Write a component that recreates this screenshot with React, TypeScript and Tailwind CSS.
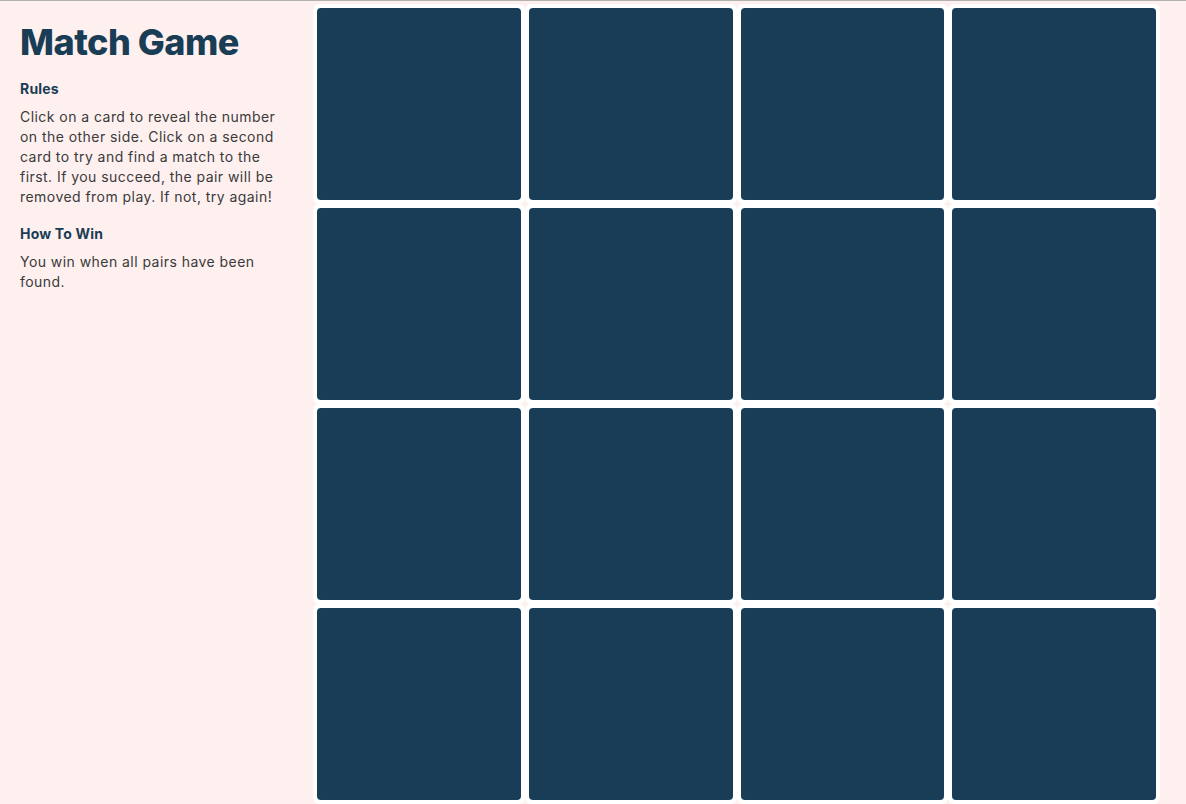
export default function App() {
  const cards = Array.from({ length: 16 });
  return (
    <div
      className="min-h-[804px] w-full border-t border-[#b3b3b3] bg-[#fff0f0] flex"
      style={{ fontFamily: 'Inter, "Open Sans", "Liberation Sans", sans-serif' }}
    >
      <aside className="w-[313px] shrink-0 pl-5 pr-[28px] pt-[21px]">
        <h1 className="text-[36px] leading-[40px] font-extrabold text-[#1a3d56] tracking-[-0.5px]">
          Match Game
        </h1>
        <h2 className="mt-[17px] text-[14px] leading-[20px] font-bold text-[#1a3d56] tracking-[0.2px]">Rules</h2>
        <p className="mt-2 text-[14px] leading-[20px] text-[#3a3a3a] tracking-[0.45px]">
          Click on a card to reveal the number on the other side. Click on a second card to try and
          find a match to the first. If you succeed, the pair will be removed from play. If not, try
          again!
        </p>
        <h2 className="mt-[17px] text-[14px] leading-[20px] font-bold text-[#1a3d56] tracking-[0.2px]">How To Win</h2>
        <p className="mt-2 w-[236px] text-[14px] leading-[20px] text-[#3a3a3a] tracking-[0.45px]">
          You win when all pairs have been found.
        </p>
      </aside>
      <main className="w-[847px] shrink-0 pt-[3px]">
        <div className="grid grid-cols-4 auto-rows-[200px]">
          {cards.map((_, i) => (
            <div key={i} className="bg-white rounded-[6px] p-1">
              <div className="h-full w-full rounded-[4px] bg-[#193d56]" />
            </div>
          ))}
        </div>
      </main>
    </div>
  );
}
